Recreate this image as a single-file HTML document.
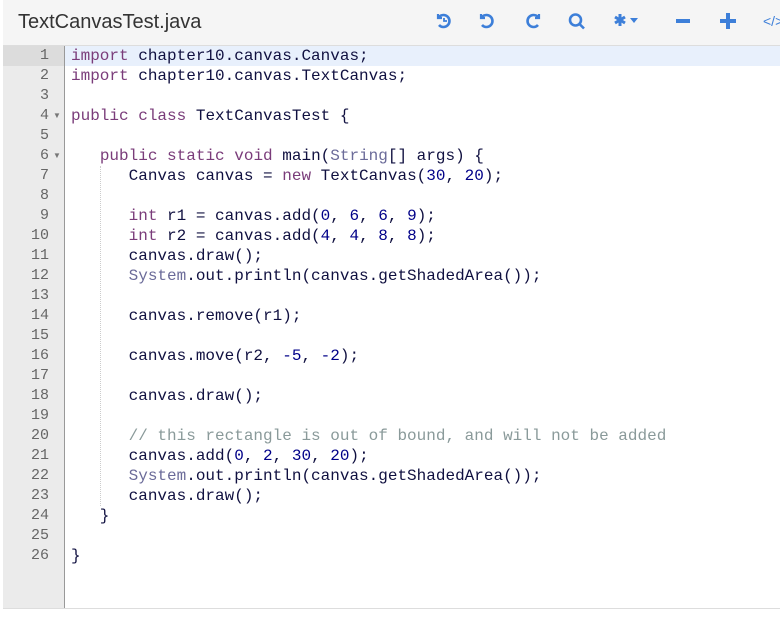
<!DOCTYPE html>
<html><head><style>
body{margin:0;width:780px;height:618px;background:#fff;overflow:hidden;font-family:"Liberation Sans",sans-serif}
.hdr{position:absolute;left:3px;top:0;width:777px;height:45px;background:#f5f5f5;border-bottom:1px solid #ddd}
.title{position:absolute;left:15px;top:11px;font-size:20px;color:#333}
.ed{position:absolute;left:3px;top:46px;width:777px;height:562px;border-bottom:1px solid #ddd}
.gut{position:absolute;left:0;top:0;width:61px;height:562px;background:#ebebeb;border-right:1px solid #999}
.ln{position:absolute;left:0;width:46px;text-align:right;font:15px "Liberation Mono",monospace;color:#666;height:20px;line-height:20px}
.fold{position:absolute;left:50px;font-size:8px;color:#777}
.act{position:absolute;left:62px;top:0;width:715px;height:20px;background:#e8f0fc}
.gact{position:absolute;left:0;top:0;width:61px;height:20px;background:#dcdcdc}
pre{position:absolute;left:68px;top:0;margin:0;font:16px/20px "Liberation Mono",monospace;color:#101040}
.k{color:#7a3c7a}.n{color:#000088}.c{color:#8a9a9a}.t{color:#6b6b99}
.g{position:absolute;border-left:1px dotted #ccc;width:0}
svg{position:absolute;top:12px}
</style></head><body>
<div class="hdr"><div class="title">TextCanvasTest.java</div>
<svg style="left:433px" width="16" height="18" viewBox="0 0 16 18" fill="none" stroke="#3d7fd9" stroke-width="2.6"><path d="M3 5 A6 6 0 1 1 3 13"/><path d="M2 2v4h4" stroke-width="2.2"/><path d="M8 6v3h3" stroke-width="1.8"/></svg>
<svg style="left:476px" width="16" height="18" viewBox="0 0 16 18" fill="none" stroke="#3d7fd9" stroke-width="2.6"><path d="M3 5 A6 6 0 1 1 3 13"/><path d="M2 2v4h4" stroke-width="2.2"/></svg>
<svg style="left:522px" width="16" height="18" viewBox="0 0 16 18" fill="none" stroke="#3d7fd9" stroke-width="2.6"><path d="M13 5 A6 6 0 1 0 13 13"/><path d="M14 2v4h-4" stroke-width="2.2"/></svg>
<svg style="left:565px" width="18" height="20" viewBox="0 0 18 20" fill="none" stroke="#3d7fd9" stroke-width="2.6"><circle cx="7.5" cy="8" r="5.5"/><path d="M11.5 12l4.5 4.5"/></svg>
<svg style="left:610px" width="14" height="16" viewBox="0 0 14 16" stroke="#3d7fd9" stroke-width="3"><path d="M7 2v12M2 5l10 6M12 5L2 11"/></svg>
<svg style="left:627px;top:18px" width="8" height="6" viewBox="0 0 8 6" fill="#3d7fd9"><path d="M0 0h8L4 5z"/></svg>
<svg style="left:673px" width="14" height="18" viewBox="0 0 14 18" stroke="#3d7fd9" stroke-width="4"><path d="M0 9h14"/></svg>
<svg style="left:717px" width="16" height="18" viewBox="0 0 16 18" stroke="#3d7fd9" stroke-width="4"><path d="M0 9h16M8 1v16"/></svg>
<div style="position:absolute;left:760px;top:13px;font-size:14px;color:#3d7fd9">&lt;/&gt;</div>
</div>
<div class="ed">
<div class="gut"><div class="gact"></div></div>
<div class="act"></div>
<div class="ln" style="top:0">1</div><div class="ln" style="top:20px">2</div><div class="ln" style="top:40px">3</div><div class="ln" style="top:60px">4</div><div class="fold" style="top:65px">▼</div><div class="ln" style="top:80px">5</div><div class="ln" style="top:100px">6</div><div class="fold" style="top:105px">▼</div><div class="ln" style="top:120px">7</div><div class="ln" style="top:140px">8</div><div class="ln" style="top:160px">9</div><div class="ln" style="top:180px">10</div><div class="ln" style="top:200px">11</div><div class="ln" style="top:220px">12</div><div class="ln" style="top:240px">13</div><div class="ln" style="top:260px">14</div><div class="ln" style="top:280px">15</div><div class="ln" style="top:300px">16</div><div class="ln" style="top:320px">17</div><div class="ln" style="top:340px">18</div><div class="ln" style="top:360px">19</div><div class="ln" style="top:380px">20</div><div class="ln" style="top:400px">21</div><div class="ln" style="top:420px">22</div><div class="ln" style="top:440px">23</div><div class="ln" style="top:460px">24</div><div class="ln" style="top:480px">25</div><div class="ln" style="top:500px">26</div>
<div class="g" style="left:97px;top:120px;height:340px"></div>
<pre><span class="k">import</span> chapter10.canvas.Canvas;
<span class="k">import</span> chapter10.canvas.TextCanvas;

<span class="k">public</span> <span class="k">class</span> TextCanvasTest {

   <span class="k">public</span> <span class="k">static</span> <span class="k">void</span> main(<span class="t">String</span>[] args) {
      Canvas canvas = <span class="k">new</span> TextCanvas(<span class="n">30</span>, <span class="n">20</span>);

      <span class="k">int</span> r1 = canvas.add(<span class="n">0</span>, <span class="n">6</span>, <span class="n">6</span>, <span class="n">9</span>);
      <span class="k">int</span> r2 = canvas.add(<span class="n">4</span>, <span class="n">4</span>, <span class="n">8</span>, <span class="n">8</span>);
      canvas.draw();
      <span class="t">System</span>.out.println(canvas.getShadedArea());

      canvas.remove(r1);

      canvas.move(r2, <span class="n">-5</span>, <span class="n">-2</span>);

      canvas.draw();

      <span class="c">// this rectangle is out of bound, and will not be added</span>
      canvas.add(<span class="n">0</span>, <span class="n">2</span>, <span class="n">30</span>, <span class="n">20</span>);
      <span class="t">System</span>.out.println(canvas.getShadedArea());
      canvas.draw();
   }

}</pre>
</div>
</body></html>
